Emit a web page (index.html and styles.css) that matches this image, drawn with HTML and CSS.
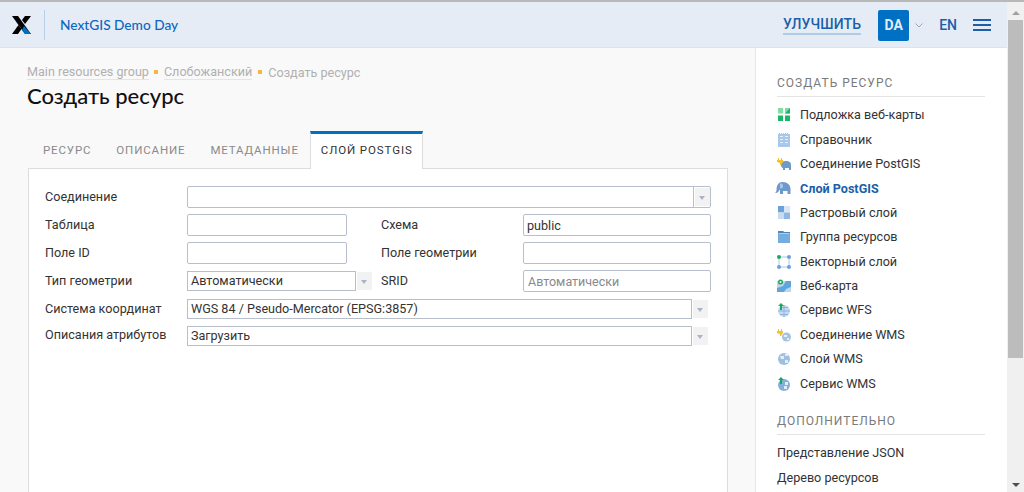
FILE: index.html
```html
<!DOCTYPE html>
<html lang="ru">

<head>
    <meta charset="UTF-8">
    <title>Создать ресурс</title>
    <link rel="stylesheet" href="styles.css">
</head>

<body>
    <div class="page">
        <div class="view">
            <header class="header">
                <svg class="logo" width="20" height="20" viewBox="0 0 20 20">
                    <path d="M0 1h6l13 18h-6z" fill="#000"/>
                    <path d="M0 19l6.500-9 3 4-3.500 5z" fill="#000"/>
                    <path d="M13 1h6l-6 8-3-4z" fill="#000"/>
                    <path d="M12 11l7 8h-6l-3-4z" fill="#0070c5"/>
                </svg>
                <a class="app-name">NextGIS Demo Day</a>
                <a class="upgrade">УЛУЧШИТЬ</a>
                <div class="avatar">DA</div>
                <svg class="chevron" width="8" height="5" viewBox="0 0 8 5"><path d="M.5.500L4 4 7.500.500" fill="none" stroke="#8fa9cc"/></svg>
                <span class="lang">EN</span>
                <div class="burger"><i></i><i></i><i></i></div>
            </header>

            <div class="body">
                <main class="content">
                    <div class="crumbs">
                        <a>Main resources group</a><b></b><a>Слобожанский</a><b></b><span>Создать ресурс</span>
                    </div>
                    <h1>Создать ресурс</h1>

                    <div class="tabs">
                        <div class="tab">Ресурс</div>
                        <div class="tab">Описание</div>
                        <div class="tab">Метаданные</div>
                        <div class="tab active">Слой PostGIS</div>
                    </div>

                    <div class="panel">
                        <div class="row">
                            <label>Соединение</label>
                            <div class="joined"><div class="joined-text"></div><div class="arrow"></div></div>
                        </div>
                        <div class="row">
                            <label>Таблица</label>
                            <div class="box half"></div>
                            <label class="second">Схема</label>
                            <div class="box half2">public</div>
                        </div>
                        <div class="row">
                            <label>Поле ID</label>
                            <div class="box half"></div>
                            <label class="second">Поле геометрии</label>
                            <div class="box half2"></div>
                        </div>
                        <div class="row">
                            <label>Тип геометрии</label>
                            <div class="combo short"><div class="box">Автоматически</div><div class="arrow"></div></div>
                            <label class="second srid">SRID</label>
                            <div class="box half2 placeholder">Автоматически</div>
                        </div>
                        <div class="row">
                            <label>Система координат</label>
                            <div class="combo wide"><div class="box">WGS 84 / Pseudo-Mercator (EPSG:3857)</div><div class="arrow"></div></div>
                        </div>
                        <div class="row last">
                            <label>Описания атрибутов</label>
                            <div class="combo wide"><div class="box">Загрузить</div><div class="arrow"></div></div>
                        </div>
                    </div>
                </main>

                <aside class="sidebar">
                    <h2>Создать ресурс</h2>
                    <ul class="menu">
                        <li>
                            <svg width="16" height="14" viewBox="0 0 16 14"><path d="M2 0h5v5.500H2z" fill="#7fdca4"/><path d="M9 0h5v5.500H9z" fill="#7fdca4"/><path d="M9 5.500L14 0v5.500z" fill="#19b866"/><path d="M2 7.500h5V13H2z" fill="#19b866"/><path d="M9 7.500h5V13H9z" fill="#19b866"/></svg>
                            Подложка веб-карты
                        </li>
                        <li>
                            <svg width="16" height="14" viewBox="0 0 16 14"><path d="M2 1h12v13H2z" fill="#a9c7ea"/><path d="M3 0h1v1H3zM5 0h1v1H5zM7 0h1v1H7zM9 0h1v1H9zM11 0h1v1h-1z" fill="#a9c7ea"/><path d="M4 3h3v1H4zM9 3h3v1H9zM4 6h3v1H4zM9 6h3v1H9zM4 9h3v1H4zM9 9h3v1H9z" fill="#e6f0fa"/></svg>
                            Справочник
                        </li>
                        <li>
                            <svg width="16" height="14" viewBox="0 0 16 14"><path d="M5 8c0-3 2-4 5-4s5 1 5 4v5h-2v-2H9v2H7v-2C6 11 5 10 5 8z" fill="#6d9acb"/><path d="M2 1h1v2h2V1h1v2h1v2L5 8H4V6L1 5V3h1z" fill="#f3c02f"/></svg>
                            Соединение PostGIS
                        </li>
                        <li class="current">
                            <svg width="16" height="14" viewBox="0 0 16 14"><path d="M0 11c1 0 1.500-.5 1.500-2 0-5 2-8 6-8 5 0 8 3 8 7v5h-3v-3H8v3H5V8.500C4 9 3.500 12 1 12z" fill="#6d9acb"/><path d="M5 3c2-1 3 0 3 2s-1 3-3 2z" fill="#a9c7ea"/></svg>
                            Слой PostGIS
                        </li>
                        <li>
                            <svg width="16" height="14" viewBox="0 0 16 14"><path d="M2 0h6v6.500H2z" fill="#6da2d9"/><path d="M8 0h6v6.500H8z" fill="#dbe7f5"/><path d="M2 6.500h6V13H2z" fill="#c9dbf0"/><path d="M8 6.500h6V13H8z" fill="#8db8e3"/></svg>
                            Растровый слой
                        </li>
                        <li>
                            <svg width="16" height="14" viewBox="0 0 16 14"><path d="M2 1h5l1 1h6v11H2z" fill="#78acdc"/><path d="M2 1h5l1 1h6v1H2z" fill="#4d87bd"/><path d="M3 3h10v1H3z" fill="#a9cdee"/></svg>
                            Группа ресурсов
                        </li>
                        <li>
                            <svg width="16" height="14" viewBox="0 0 16 14"><path d="M3 2h10v10H3z" fill="none" stroke="#a9c7ea"/><circle cx="3" cy="2" r="2" fill="#19a860"/><circle cx="13" cy="2" r="2" fill="#6d9fd8"/><circle cx="3" cy="12" r="2" fill="#6d9fd8"/><circle cx="13" cy="12" r="2" fill="#6d9fd8"/></svg>
                            Векторный слой
                        </li>
                        <li>
                            <svg width="16" height="14" viewBox="0 0 16 14"><path d="M1 2h14v11H1z" fill="#bcd6ee"/><path d="M1 9l6-2 3-5h5v6l-5 2-2 3H1z" fill="#5fa5dc"/><circle cx="4.500" cy="3" r="2.500" fill="#19a860"/><circle cx="4.500" cy="3" r="1" fill="#fff"/></svg>
                            Веб-карта
                        </li>
                        <li>
                            <svg width="16" height="14" viewBox="0 0 16 14"><circle cx="8" cy="8" r="6" fill="#c6d9ef"/><path d="M2 8h12M8 2v12M4 4.500h8M4 11.500h8" stroke="#8fb3da" fill="none"/><path d="M5 0l3 3H6v4H4V3H2z" fill="#19a860"/></svg>
                            Сервис WFS
                        </li>
                        <li>
                            <svg width="16" height="14" viewBox="0 0 16 14"><circle cx="10.500" cy="9" r="4.500" fill="#a3c2e4"/><path d="M8 7h3v2H8zM11 10h2v2h-2z" fill="#e6f0fa"/><path d="M2 1h1v2h2V1h1v2h1v2L5 8H4V6L1 5V3h1z" fill="#f3c02f"/></svg>
                            Соединение WMS
                        </li>
                        <li>
                            <svg width="16" height="14" viewBox="0 0 16 14"><circle cx="8" cy="7" r="6" fill="#9dbfe3"/><path d="M4 4h4v3H5zM9 8h3v3H9zM9 2h3v2H9z" fill="#e3edf8"/></svg>
                            Слой WMS
                        </li>
                        <li>
                            <svg width="16" height="14" viewBox="0 0 16 14"><circle cx="8" cy="8" r="6" fill="#86aedb"/><path d="M9 5h3v3H9zM8 9h3v3H8z" fill="#e3edf8"/><path d="M5 0l3 3H6v4H4V3H2z" fill="#19a860"/></svg>
                            Сервис WMS
                        </li>
                    </ul>
                    <h2 class="more">Дополнительно</h2>
                    <ul class="links">
                        <li>Представление JSON</li>
                        <li>Дерево ресурсов</li>
                    </ul>
                </aside>
            </div>
        </div>

        <div class="scrollbar">
            <span class="up"></span>
            <div class="thumb"></div>
            <span class="down"></span>
        </div>
    </div>
</body>

</html>
```

FILE: styles.css
```css
html, body {
    margin: 0;
    height: 100%;
    overflow: hidden;
}

body {
    font-family: Roboto, "Noto Sans", sans-serif;
    font-size: 12.600px;
    color: #212121;
    background-color: #fff;
    border-top: 2px solid #b8b8b8;
    box-sizing: border-box;
}

.page {
    display: flex;
    height: 490px;
}

.view {
    flex: 1;
    min-width: 0;
    display: flex;
    flex-direction: column;
}

/* header */
.header {
    flex: none;
    box-sizing: border-box;
    height: 46px;
    display: flex;
    align-items: center;
    background-color: #e5ecf6;
    border-bottom: 1px solid #dde3ec;
    padding: 1px 16px 0 12px;
}

.logo {
    flex: none;
    margin-right: 12px;
}

.app-name {
    padding-left: 15px;
    height: 30px;
    line-height: 30px;
    border-left: 1px solid #b7d1ec;
    font-family: Lato, Roboto, sans-serif;
    font-size: 13.700px;
    font-weight: 500;
    color: #0b67bf;
}

.upgrade {
    margin-left: auto;
    font-size: 14px;
    font-weight: 500;
    letter-spacing: .12px;
    color: #1b5fa8;
    border-bottom: 2px solid #aecbea;
    line-height: 18px;
}

.avatar {
    width: 31px;
    height: 31px;
    margin-left: 17px;
    border-radius: 2px;
    background-color: #0070c5;
    color: #e5ecf6;
    font-size: 14px;
    font-weight: 700;
    line-height: 31px;
    text-align: center;
}

.chevron {
    margin-left: 6px;
}

.lang {
    margin-left: 16px;
    font-size: 14px;
    font-weight: 500;
    color: #1b5fa8;
}

.burger {
    margin-left: 16px;
    width: 18px;
}

.burger i {
    display: block;
    height: 2px;
    margin: 3px 0;
    background-color: #1b5fa8;
}

/* main column */
.body {
    flex: 1;
    min-height: 0;
    display: flex;
}

.content {
    flex: 1;
    min-width: 0;
    background-color: #f9f9f9;
    padding: 15px 27px 0 28px;
    overflow: hidden;
}

.crumbs {
    display: flex;
    align-items: center;
    height: 18px;
    margin-left: -1px;
    color: #b0b0b0;
}

.crumbs a {
    border-bottom: 1px solid #e4e4e4;
    line-height: 15px;
}

.crumbs a:first-child {
    margin-right: -1px;
}

.crumbs b {
    width: 4px;
    height: 4px;
    margin: 0 6px;
    background-color: #f5b642;
}

h1 {
    margin: 0 0 0 -1px;
    font-family: Lato, Roboto, sans-serif;
    font-size: 22px;
    font-weight: 500;
    line-height: 30px;
    color: #111;
}

.tabs {
    display: flex;
    margin-top: 20px;
    margin-left: 2.500px;
    height: 37px;
}

.tab {
    padding: 0 12.500px;
    line-height: 39px;
    font-size: 11.500px;
    letter-spacing: .85px;
    text-transform: uppercase;
    color: #8a8a8a;
}

.tab.active {
    position: relative;
    background-color: #fff;
    color: #333;
    line-height: 33px;
    letter-spacing: .9px;
    border: 1px solid #ddd;
    border-top: 3px solid #0070c5;
    border-bottom: 0;
    height: 35px;
    padding: 0 9px 0 10px;
    margin-left: -1.500px;
    margin-bottom: -1px;
    z-index: 1;
}

.panel {
    height: 340px;
    background-color: #fff;
    border: 1px solid #ddd;
    padding: 17px 16px 0;
}

.row {
    display: flex;
    align-items: center;
    height: 22px;
    margin-bottom: 6px;
}

.row.last {
    margin-top: -1px;
}

.row label {
    flex: none;
    width: 142px;
    padding-bottom: 2px;
    color: #333;
}

.row.last label {
    padding-bottom: 3px;
}

.row label.second {
    padding-left: 34px;
}

.row label.srid {
    padding-left: 9px;
}

.box {
    box-sizing: border-box;
    height: 22px;
    padding: 0 3px;
    line-height: 21px;
    background-color: #fff;
    border: 1px solid #b8bfcc;
    border-radius: 2px;
    color: #333;
    white-space: nowrap;
}

.half {
    width: 160px;
}

.half2 {
    width: 188px;
}

.placeholder {
    padding: 0 4px;
    color: #8a8a8a;
    font-size: 12.500px;
}

.combo {
    display: flex;
    align-items: center;
    gap: 1px;
}

.combo .box {
    flex: 1;
    height: 20px;
    line-height: 18px;
    border-radius: 0;
}

.combo.wide {
    width: 521px;
}

.combo.short {
    width: 185px;
}

.joined {
    box-sizing: border-box;
    display: flex;
    align-items: center;
    width: 524px;
    height: 22px;
    border: 1px solid #b8bfcc;
    border-radius: 2px;
}

.joined-text {
    flex: 1;
    height: 20px;
    border-right: 1px solid #b8bfcc;
    margin-right: 1px;
}

.arrow {
    flex: none;
    width: 15px;
    height: 18px;
    background-color: #f2f2f2;
    position: relative;
}

.arrow::after {
    content: "";
    position: absolute;
    left: 4px;
    top: 8px;
    border-top: 4px solid #a9b4c8;
    border-left: 3px solid transparent;
    border-right: 3px solid transparent;
}

/* right column */
.sidebar {
    flex: none;
    width: 252px;
    box-sizing: border-box;
    padding: 28px 22px 0 21px;
    background-color: #fff;
    border-left: 1px solid #e6e6e6;
    overflow: hidden;
}

h2 {
    margin: 0;
    padding-bottom: 5px;
    font-size: 12px;
    font-weight: 400;
    letter-spacing: 1px;
    line-height: 15px;
    text-transform: uppercase;
    color: #7a7a7a;
    border-bottom: 1px solid #e4e4e4;
}

.menu {
    list-style: none;
    margin: 6.300px 0 0;
    padding: 0;
}

.menu li {
    position: relative;
    height: 24.400px;
    line-height: 24.400px;
    padding-left: 23px;
    color: #333;
    white-space: nowrap;
}

.menu svg {
    position: absolute;
    left: -1px;
    top: 5px;
}

.menu li.current {
    font-weight: 700;
    color: #1b5fa8;
    line-height: 25.400px;
}

.menu li.current svg {
    left: -2px;
}

h2.more {
    margin-top: 18.300px;
}

.links {
    list-style: none;
    margin: 5px 0 0;
    padding: 0;
}

.links li {
    line-height: 25px;
    color: #333;
}

/* scrollbar */
.scrollbar {
    flex: none;
    width: 17px;
    display: flex;
    flex-direction: column;
    align-items: center;
    background-color: #f0f0f0;
}

.thumb {
    width: 15px;
    height: 338px;
    margin-top: 5px;
    background-color: #bcbcbc;
}

.up, .down {
    flex: none;
    width: 0;
    height: 0;
    border-left: 4px solid transparent;
    border-right: 4px solid transparent;
}

.up {
    margin-top: 9px;
    border-bottom: 4px solid #a0a0a0;
}

.down {
    margin-top: auto;
    margin-bottom: 5px;
    border-top: 4px solid #505050;
}
```
